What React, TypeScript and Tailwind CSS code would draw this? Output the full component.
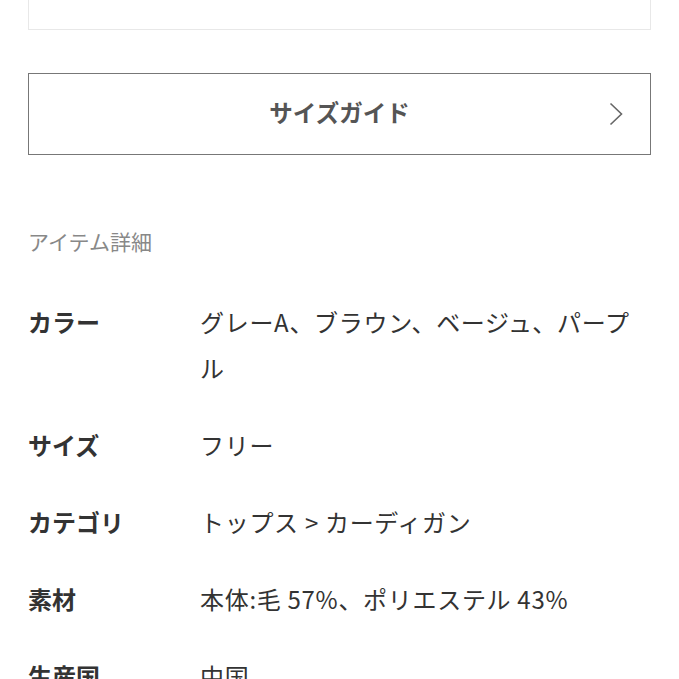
const details = [
  { label: "カラー", value: "グレーA、ブラウン、ベージュ、パープル" },
  { label: "サイズ", value: "フリー" },
  { label: "カテゴリ", value: "トップス > カーディガン" },
  { label: "素材", value: "本体:毛 57%、ポリエステル 43%" },
  { label: "生産国", value: "中国" },
];

export default function App() {
  return (
    <div
      className="h-[679px] overflow-hidden bg-white px-[28px] text-[#333]"
      style={{ fontFamily: '"Noto Sans CJK JP", "Noto Sans", sans-serif' }}
    >
      <div className="h-[30px] border border-t-0 border-[#e8e8e8]" />

      <button className="relative mt-[43px] flex h-[82px] w-full items-center justify-center border-[1.5px] border-[#777] bg-white">
        <span className="-mt-[3px] text-[23.5px] font-bold text-[#555]">サイズガイド</span>
        <svg
          className="absolute right-[27px] top-1/2 -translate-y-1/2"
          width="14"
          height="24"
          viewBox="0 0 14 24"
          fill="none"
          stroke="#666"
          strokeWidth="1.6"
        >
          <path d="M1.5 1.5 L12.5 12 L1.5 22.5" />
        </svg>
      </button>

      <h3 className="mt-[71px] text-[21px] leading-[30px] text-[#888]">アイテム詳細</h3>

      <dl className="mt-[43px] flex flex-col gap-[31px]">
        {details.map((d) => (
          <div key={d.label} className="flex text-[24px] leading-[46px]">
            <dt className="w-[172px] shrink-0 font-bold">{d.label}</dt>
            <dd className="flex-1 pr-[6px] tracking-[0.7px]">{d.value}</dd>
          </div>
        ))}
      </dl>
    </div>
  );
}
